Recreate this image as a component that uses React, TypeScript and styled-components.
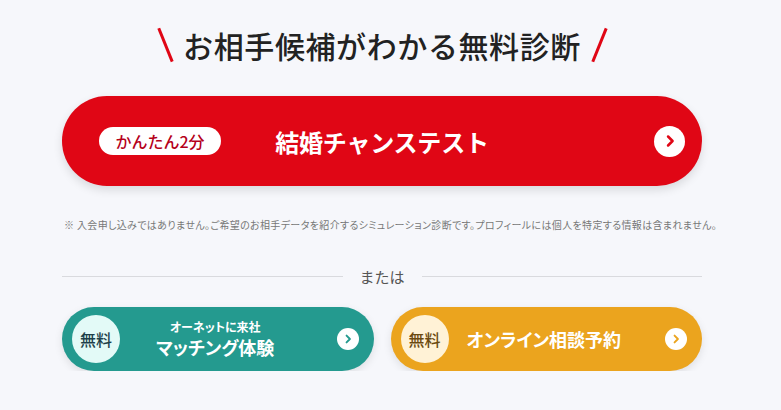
import React from "react";
import styled, { createGlobalStyle } from "styled-components";

const Global = createGlobalStyle`
  html, body { margin: 0; padding: 0; background: #f6f7fb; }
  body { font-family: "Noto Sans CJK JP", "Noto Sans", sans-serif; }
`;

const Page = styled.div`
  width: 640px;
  padding: 24px 0 0 62px;
  display: flex;
  flex-direction: column;
`;

const TitleRow = styled.h2`
  margin: 0;
  height: 42px;
  display: flex;
  align-items: center;
  justify-content: center;
  gap: 17px;
  font-size: 30px;
  font-weight: 500;
  letter-spacing: 0.6px;
  color: #222;
`;

const Slash = styled.span<{ $dir: "l" | "r" }>`
  display: block;
  width: 2.5px;
  height: 36px;
  background: #e00615;
  transform: rotate(${(p) => (p.$dir === "l" ? "-22deg" : "22deg")});
`;

const MainButton = styled.a`
  margin-top: 30px;
  height: 90px;
  border-radius: 45px;
  background: #e00615;
  box-shadow: 0 4px 10px rgba(0, 0, 0, 0.12);
  display: grid;
  grid-template-columns: 1fr auto 1fr;
  align-items: center;
  padding: 0 17px;
  color: #fff;
  text-decoration: none;
`;

const Pill = styled.span`
  justify-self: start;
  margin-left: 20px;
  width: 122px;
  height: 28px;
  border-radius: 14px;
  background: #fff;
  color: #b5001a;
  font-size: 16px;
  font-weight: 500;
  display: flex;
  align-items: center;
  justify-content: center;
`;

const MainLabel = styled.span`
  font-size: 24px;
  font-weight: 700;
  letter-spacing: -0.2px;
`;

const Arrow = styled.span<{ $size: number; $color: string }>`
  justify-self: end;
  width: ${(p) => p.$size}px;
  height: ${(p) => p.$size}px;
  border-radius: 50%;
  background: #fff;
  color: ${(p) => p.$color};
  display: flex;
  align-items: center;
  justify-content: center;
`;

const Note = styled.p`
  margin: 32px 0 0 2px;
  font-size: 10px;
  color: #777;
  white-space: nowrap;
  font-feature-settings: "palt";
  letter-spacing: 0.35px;
  line-height: 14px;
`;

const OrRow = styled.div`
  margin-top: 34px;
  display: flex;
  align-items: center;
  gap: 17px;
  font-size: 15px;
  color: #555;
  &::before,
  &::after {
    content: "";
    flex: 1;
    height: 1px;
    background: #d9dade;
  }
`;

const SubRow = styled.div`
  margin-top: 20px;
  display: grid;
  grid-template-columns: 1fr 1fr;
  gap: 17px;
`;

const SubButton = styled.a<{ $bg: string }>`
  height: 64px;
  border-radius: 32px;
  background: ${(p) => p.$bg};
  box-shadow: 0 3px 8px rgba(0, 0, 0, 0.1);
  display: grid;
  grid-template-columns: 1fr auto 1fr;
  align-items: center;
  padding: 0 15px 0 10px;
  color: #fff;
  text-decoration: none;
`;

const Badge = styled.span<{ $bg: string; $fg: string }>`
  justify-self: start;
  width: 48px;
  height: 48px;
  border-radius: 50%;
  background: ${(p) => p.$bg};
  color: ${(p) => p.$fg};
  font-size: 16px;
  font-weight: 500;
  display: flex;
  align-items: center;
  justify-content: center;
`;

const SubText = styled.span`
  display: flex;
  flex-direction: column;
  align-items: center;
  font-weight: 700;
  font-feature-settings: "palt";
`;

const Small = styled.span`
  font-size: 12px;
  line-height: 16px;
`;

const Big = styled.span`
  font-size: 18px;
  line-height: 24px;
`;

const Chevron = ({ size }: { size: number }) => (
  <svg width={size} height={size} viewBox="0 0 10 10" fill="none">
    <path d="M3.8 2.2 L6.6 5 L3.8 7.8" stroke="currentColor" strokeWidth="1.6" strokeLinecap="round" strokeLinejoin="round" />
  </svg>
);

export default function App() {
  return (
    <>
      <Global />
      <Page>
        <TitleRow>
          <Slash $dir="l" />
          <span>お相手候補がわかる無料診断</span>
          <Slash $dir="r" />
        </TitleRow>
        <MainButton href="#">
          <Pill>かんたん2分</Pill>
          <MainLabel>結婚チャンステスト</MainLabel>
          <Arrow $size={31} $color="#e00615">
            <Chevron size={16} />
          </Arrow>
        </MainButton>
        <Note>
          ※ 入会申し込みではありません。ご希望のお相手データを紹介するシミュレーション診断です。プロフィールには個人を特定する情報は含まれません。
        </Note>
        <OrRow>または</OrRow>
        <SubRow>
          <SubButton href="#" $bg="#249a8f">
            <Badge $bg="#e3faf7" $fg="#1d3f4a">無料</Badge>
            <SubText>
              <Small>オーネットに来社</Small>
              <Big>マッチング体験</Big>
            </SubText>
            <Arrow $size={22} $color="#249a8f">
              <Chevron size={12} />
            </Arrow>
          </SubButton>
          <SubButton href="#" $bg="#eba41e">
            <Badge $bg="#fff2d6" $fg="#6b4a10">無料</Badge>
            <SubText>
              <Big>オンライン相談予約</Big>
            </SubText>
            <Arrow $size={22} $color="#eba41e">
              <Chevron size={12} />
            </Arrow>
          </SubButton>
        </SubRow>
      </Page>
    </>
  );
}
